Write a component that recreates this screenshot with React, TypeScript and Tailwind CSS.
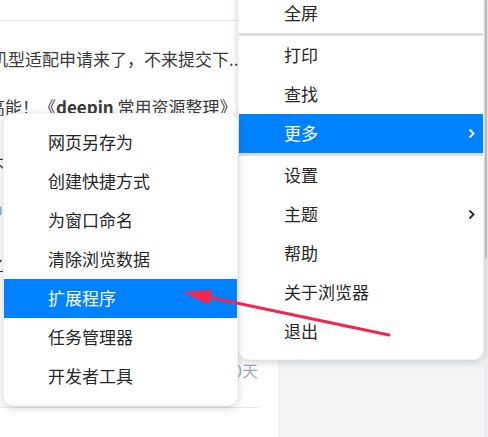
const mainItems: ({ label: string; sub?: boolean; active?: boolean } | 'sep')[] = [
  { label: '全屏' },
  'sep',
  { label: '打印' },
  { label: '查找' },
  { label: '更多', sub: true, active: true },
  'sep',
  { label: '设置' },
  { label: '主题', sub: true },
  { label: '帮助' },
  { label: '关于浏览器' },
  { label: '退出' },
];

const moreItems = ['网页另存为', '创建快捷方式', '为窗口命名', '清除浏览数据', '扩展程序', '任务管理器', '开发者工具'];

const Chevron = () => (
  <svg width="7" height="11" viewBox="0 0 7 11" fill="none">
    <path d="M1.5 1.5L5.5 5.5L1.5 9.5" stroke="currentColor" strokeWidth="1.8" />
  </svg>
);

export default function App() {
  return (
    <div className="relative w-[488px] h-[437px] overflow-hidden bg-white font-['Noto_Sans_CJK_SC','Noto_Sans',sans-serif]">
      {/* page behind the menus */}
      <div className="flex h-full">
        <div className="w-[278px] shrink-0 bg-white">
          <div className="w-[258px]">
            <div className="h-[21px] border-b border-[#e6e6e6]" />
            <div className="mt-[26px] h-[24px] leading-[24px] text-[17px] text-[#3a3a3a] whitespace-nowrap -ml-[9px]">机型适配申请来了，不来提交下...</div>
            <div className="mt-[24px] h-[24px] leading-[24px] text-[17px] text-[#3a3a3a] whitespace-nowrap -ml-[12px]">
              高能！《<span className="font-bold">deepin</span> 常用资源整理》
            </div>
            <div className="mt-[34px] h-[24px] leading-[24px] text-[17px] text-[#3a3a3a] whitespace-nowrap -ml-[13px]">不</div>
            <div className="mt-[22px] h-[24px] leading-[24px] text-[17px] text-[#9aa2ae] whitespace-nowrap -ml-[14px]">中</div>
            <div className="mt-[29px] h-[24px] leading-[24px] text-[17px] text-[#3a3a3a] whitespace-nowrap -ml-[13px]">之</div>
            <div className="mt-[82px] h-[24px] leading-[24px] text-[16px] text-[#a4abb8] text-right">10天</div>
            <div className="mt-[25px] border-b border-[#e6e6e6]" />
          </div>
        </div>
        <div className="flex-1 bg-[#f3f4f6] flex justify-end">
          <div className="w-[4px] h-full bg-[#eceef1] flex justify-center">
            <div className="w-[2px] h-[258px] bg-[#c6c6c6]" />
          </div>
        </div>
      </div>

      {/* main browser menu */}
      <div className="absolute left-[238px] top-[-15px] w-[246px] bg-white rounded-[10px] py-2 border border-black/5 shadow-[0_2px_8px_rgba(0,0,0,0.18)] text-[17px] text-[#262626]">
        {mainItems.map((it, i) =>
          it === 'sep' ? (
            <div key={i} className="h-[3px] bg-[#dcdde1]" />
          ) : (
            <div
              key={i}
              className={`h-[39px] flex items-center justify-between pl-[45px] pr-[8px] leading-none ${it.active ? 'bg-[#0081ff] text-white' : ''}`}
            >
              <span className="-mt-[2px]">{it.label}</span>
              {it.sub && <Chevron />}
            </div>
          )
        )}
      </div>

      {/* "更多" submenu */}
      <div className="absolute left-[3px] top-[113px] w-[235px] bg-white rounded-[10px] py-[9px] border border-black/5 shadow-[0_2px_8px_rgba(0,0,0,0.18)] text-[17px] text-[#262626]">
        {moreItems.map((label) => (
          <div
            key={label}
            className={`h-[39px] flex items-center pl-[44px] leading-none ${label === '扩展程序' ? 'bg-[#0081ff] text-white' : ''}`}
          >
            <span className="-mt-[2px]">{label}</span>
          </div>
        ))}
      </div>

      {/* annotation arrow */}
      <svg className="absolute inset-0 pointer-events-none" width="488" height="437" viewBox="0 0 488 437">
        <line x1="208" y1="297" x2="389" y2="335" stroke="#f2264f" strokeWidth="3" strokeLinecap="round" />
        <polygon points="183,292 212,290 209,305" fill="#f2264f" />
      </svg>
    </div>
  );
}
